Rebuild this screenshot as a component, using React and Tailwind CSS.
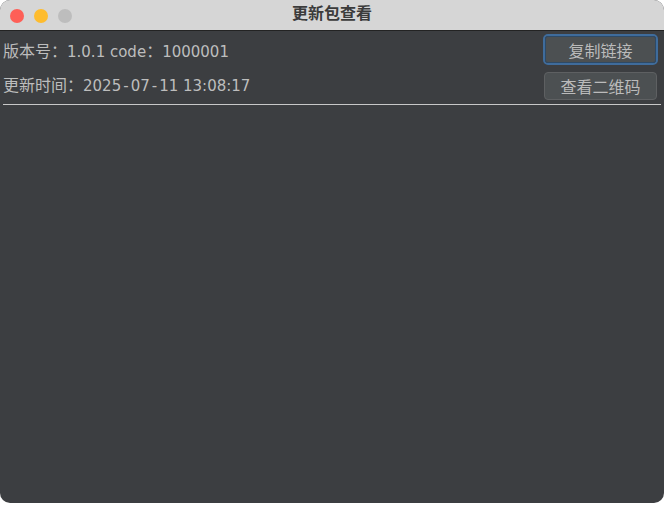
import React from 'react'

const App = () => {
  return (
    <div className="w-[664px] h-[508px] bg-white">
      <div className="w-[664px] h-[503px] rounded-[10px] overflow-hidden flex flex-col bg-[#3c3e41] font-['DejaVu_Sans','Noto_Sans_CJK_SC',sans-serif]">
        {/* title bar */}
        <div className="h-[31px] shrink-0 bg-[#d6d6d6] border-b border-[#232323] relative flex items-start justify-center pt-[4px]">
          <div className="absolute left-[10px] top-[9px] flex gap-[10px]">
            <span className="w-[14px] h-[14px] rounded-full bg-[#fe5f57]" />
            <span className="w-[14px] h-[14px] rounded-full bg-[#febc2e]" />
            <span className="w-[14px] h-[14px] rounded-full bg-[#bdbdbd]" />
          </div>
          <span className="text-[16px] font-bold text-[#3b3b3b] leading-none font-['Noto_Sans_CJK_SC',sans-serif]">更新包查看</span>
        </div>

        {/* body */}
        <div className="flex flex-col pt-[3px] pl-[3px] pr-[6px] text-[16px] text-[#bdbdbd]">
          <div className="h-[31px] flex items-center justify-between">
            <span className="mt-[4px]">
              版本号：<span className="text-[15px]">1.0.1 code</span>：<span className="text-[15px]">1000001</span>
            </span>
            <button className="w-[115px] h-[31px] rounded-[5px] border-2 border-[#3f6c9c] p-0 flex">
              <span className="flex-1 rounded-[3px] border border-[#2e4a66] bg-[#4c5052] flex items-center justify-center text-[#bbbbbb] font-['Noto_Sans_CJK_SC',sans-serif]">
                复制链接
              </span>
            </button>
          </div>
          <div className="h-[28px] mt-[7px] flex items-center justify-between">
            <span>
              更新时间：<span className="text-[15px]">2025<span className="px-[2px]">-</span>07<span className="px-[2px]">-</span>11 13:08:17</span>
            </span>
            <button className="w-[113px] h-[28px] mr-[1px] rounded-[4px] border border-[#5e6062] bg-[#4c5052] text-[#bbbbbb] flex items-center justify-center font-['Noto_Sans_CJK_SC',sans-serif]">
              查看二维码
            </button>
          </div>
          <div className="h-px mt-[4px] mr-[-3px] bg-[#c8c8c8]" />
        </div>
      </div>
    </div>
  )
}

export default App
